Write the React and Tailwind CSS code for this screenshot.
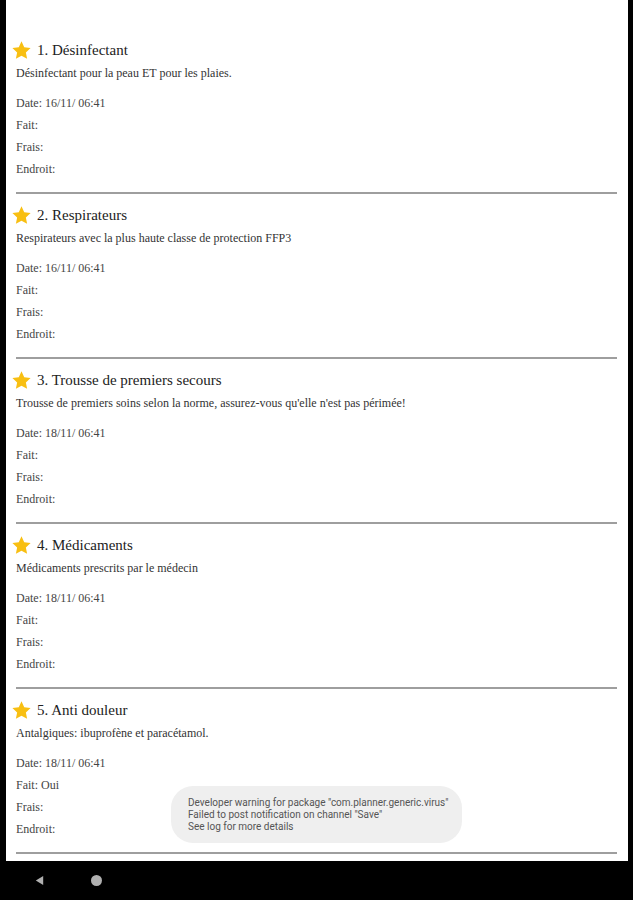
const items = [
  { n: 1, title: "Désinfectant", desc: "Désinfectant pour la peau ET pour les plaies.", date: "16/11/ 06:41", fait: "" },
  { n: 2, title: "Respirateurs", desc: "Respirateurs avec la plus haute classe de protection FFP3", date: "16/11/ 06:41", fait: "" },
  { n: 3, title: "Trousse de premiers secours", desc: "Trousse de premiers soins selon la norme, assurez-vous qu'elle n'est pas périmée!", date: "18/11/ 06:41", fait: "" },
  { n: 4, title: "Médicaments", desc: "Médicaments prescrits par le médecin", date: "18/11/ 06:41", fait: "" },
  { n: 5, title: "Anti douleur", desc: "Antalgiques: ibuprofène et paracétamol.", date: "18/11/ 06:41", fait: "Oui" },
]

function Star() {
  return (
    <svg viewBox="0 0 24 24" className="w-[21px] h-[21px] shrink-0">
      <path d="M12 1.5l3.1 6.7 7.3.9-5.4 5.1 1.4 7.3L12 17.9l-6.4 3.6 1.4-7.3-5.4-5.1 7.3-.9z" fill="#f8bf12" />
    </svg>
  )
}

function Item({ n, title, desc, date, fait }) {
  return (
    <div className="pt-[9px]">
      <div className="flex items-center h-[24px] -ml-[5px]">
        <Star />
        <span className="ml-[5px] text-[15px] text-[#222]">{n}. {title}</span>
      </div>
      <div className="h-[22px] leading-[22px] text-[12px] text-[#333]">{desc}</div>
      <div className="mt-[8px] text-[12px] text-[#444] leading-[22px]">
        <div>Date: {date}</div>
        <div>Fait:{fait ? ` ${fait}` : ""}</div>
        <div>Frais:</div>
        <div>Endroit:</div>
      </div>
      <div className="mt-[12px] h-[2px] bg-[#9e9e9e]" />
    </div>
  )
}

export default function App() {
  return (
    <div className="relative w-[633px] h-[900px] bg-black overflow-hidden font-['Liberation_Serif',serif]">
      <div className="ml-[6px] mr-[5px] h-[861px] bg-white overflow-hidden pt-[29px] pl-[10px] pr-[11px]">
        {items.map((it) => (
          <Item key={it.n} {...it} />
        ))}
      </div>
      <div className="flex items-center h-[39px]">
        <svg viewBox="0 0 12 12" className="ml-[34px] w-[11px] h-[11px]">
          <path d="M10 1L2 6l8 5z" fill="#b0b0b0" />
        </svg>
        <div className="ml-[46px] w-[11px] h-[11px] rounded-full bg-[#b0b0b0]" />
      </div>
      <div className="absolute left-[171px] top-[786px] w-[291px] h-[57px] rounded-[22px] bg-[#efefef] pl-[17px] pt-[11px] text-[10px] leading-[12px] text-[#555] font-['Roboto',sans-serif]">
        <div>Developer warning for package "com.planner.generic.virus"</div>
        <div>Failed to post notification on channel "Save"</div>
        <div>See log for more details</div>
      </div>
    </div>
  )
}
